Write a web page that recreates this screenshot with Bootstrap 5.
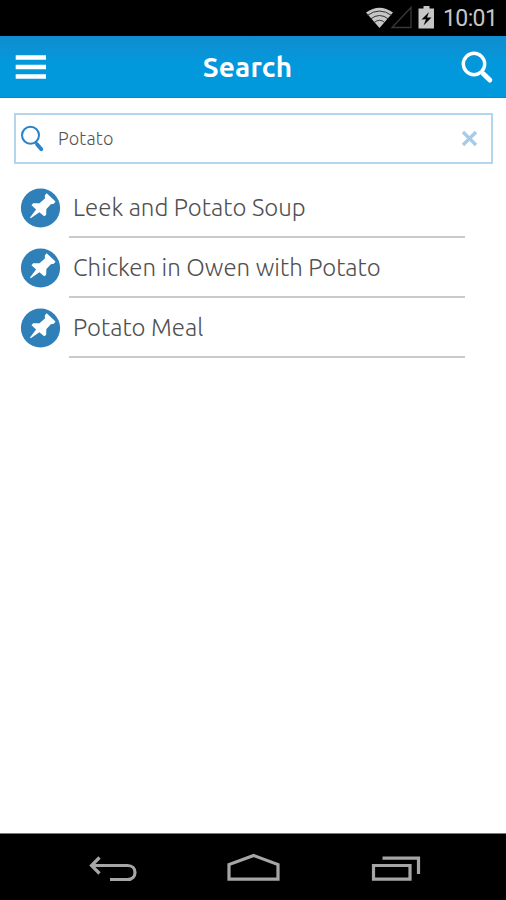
<!DOCTYPE html>
<html lang="en">
<head>
<meta charset="utf-8">
<meta name="viewport" content="width=device-width, initial-scale=1">
<title>Search</title>
<link href="https://cdn.jsdelivr.net/npm/bootstrap@5.3.0/dist/css/bootstrap.min.css" rel="stylesheet">
<style>
body{font-family:Ubuntu,"Open Sans","Noto Sans",sans-serif;height:900px;overflow:hidden}
svg{display:block;flex:none}
.status-strip{height:36px;color:#c6c6c6;padding-right:9px}
.clock{font:23px/36px Roboto,sans-serif;letter-spacing:-.6px;width:54px;margin-left:2px;padding-top:2px;white-space:nowrap}
.app-bar{height:62px;background:linear-gradient(#108dce,#0398dc 45%,#0298dc);border-bottom:1px solid #0788cc;padding:0 12px 0 15px}
.app-title{font-size:28px;font-weight:700;line-height:62px;letter-spacing:.1px;padding-right:12px}
.search-field{height:51px;margin:15px 13px 0 14px;border:2px solid #b4d5ee;padding:0 13px 0 4px;color:#555}
.search-field span{font-size:18px;font-weight:300;letter-spacing:.2px;margin-left:14px;line-height:49px}
.result-list{margin:14px 41px 0 20px}
.result{height:60px}
.result-name{height:60px;margin-left:8px;padding-left:4px;border-bottom:2px solid #cacaca;font-size:24px;font-weight:300;line-height:60px;letter-spacing:.02px;color:#505050;white-space:nowrap}
.nav-strip{height:67px;border-top:1px solid #777}
</style>
<script src="https://cdn.jsdelivr.net/npm/bootstrap@5.3.0/dist/js/bootstrap.bundle.min.js" defer></script>
</head>
<body class="d-flex flex-column bg-white">
<svg class="d-none"><defs><symbol id="pin" viewBox="0 0 40 40"><circle cx="20" cy="20" r="19.600" fill="#2f80b9"/><path d="M26.200 5.300 35 13.600 33.400 15.700 30.400 16.200 25.900 20.900 25.600 27 23.700 28.200 18.900 24.200 10.200 30.200 9.500 29.400 15.600 21.500 11 17.300 12.600 15.200 19 15.200 24.400 10.400 24.400 7.200Z" fill="#fff"/></symbol></defs></svg>
<div class="status-strip bg-black d-flex justify-content-end align-items-center">
  <svg width="76" height="36" viewBox="0 0 76 36"><path d="M1 12.500Q14.500 3 28 12.500L14.500 28Z" fill="#c6c6c6"/><path d="M2.500 15.300Q14.500 6.800 26.500 15.300M5.500 19Q14.500 12 23.500 19M9 22.700Q14.500 17.800 20 22.700" fill="none" stroke="#333" stroke-width="1"/><path d="M27 27.500H46V7.500Z" fill="none" stroke="#393939" stroke-width="1.300"/><path d="M53.500 8.500H58.500V6h6v2.500h4.500v20H53.500Z" fill="#c6c6c6"/><path d="M64 12 56.500 19.500 61 19.200 58.500 25.500 66.500 17.500 62 17.600Z" fill="#000"/></svg>
  <span class="clock">10:01</span>
</div>
<header class="app-bar d-flex justify-content-between align-items-center text-white">
  <svg width="32" height="26" viewBox="0 0 32 26"><path d="M.7 3.500H31M.7 13H31M.7 22.500H31" stroke="#fff" stroke-width="4.600"/></svg>
  <h1 class="app-title m-0">Search</h1>
  <svg width="34" height="34" viewBox="0 0 34 34"><circle cx="14" cy="14" r="10.700" fill="none" stroke="#fff" stroke-width="3.400"/><path d="m21.500 22 2 2" stroke="#fff" stroke-width="3"/><path d="m23.500 24 6.300 6" stroke="#fff" stroke-width="5" stroke-linecap="round"/></svg>
</header>
<div class="search-field d-flex align-items-center">
  <svg width="24" height="28" viewBox="0 0 24 28"><circle cx="10.500" cy="10.200" r="8.500" fill="none" stroke="#2784ca" stroke-width="2"/><path d="m15.500 17 2 2.500" stroke="#2784ca" stroke-width="2"/><path d="m17 19.300 4.300 5" stroke="#2784ca" stroke-width="3.800" stroke-linecap="round"/></svg>
  <span>Potato</span>
  <svg class="ms-auto" width="17" height="17" viewBox="0 0 17 17"><path d="m2 2 13 13M15 2 2 15" stroke="#a5cce8" stroke-width="3.300"/></svg>
</div>
<main class="result-list flex-grow-1">
  <div class="result d-flex align-items-center"><svg width="41" height="40"><use href="#pin"/></svg><div class="result-name flex-grow-1">Leek and Potato Soup</div></div>
  <div class="result d-flex align-items-center"><svg width="41" height="40"><use href="#pin"/></svg><div class="result-name flex-grow-1">Chicken in Owen with Potato</div></div>
  <div class="result d-flex align-items-center"><svg width="41" height="40"><use href="#pin"/></svg><div class="result-name flex-grow-1">Potato Meal</div></div>
</main>
<nav class="nav-strip bg-black">
  <svg width="506" height="66" viewBox="0 834 506 66" fill="none" stroke="#a6a6a6" stroke-width="3.200"><path d="M92 865.500H127.500C137.500 865.500 137.500 879.500 127.500 879.500H110M99.500 857.500 91.500 865.500 99.500 873.500"/><path d="M229 879.200V864.500L253.700 855.500 278 864.500V879.200Z"/><path d="M373.500 865.500H410V879.200H373.500ZM382.500 858.200H418.500V874"/></svg>
</nav>
</body>
</html>
